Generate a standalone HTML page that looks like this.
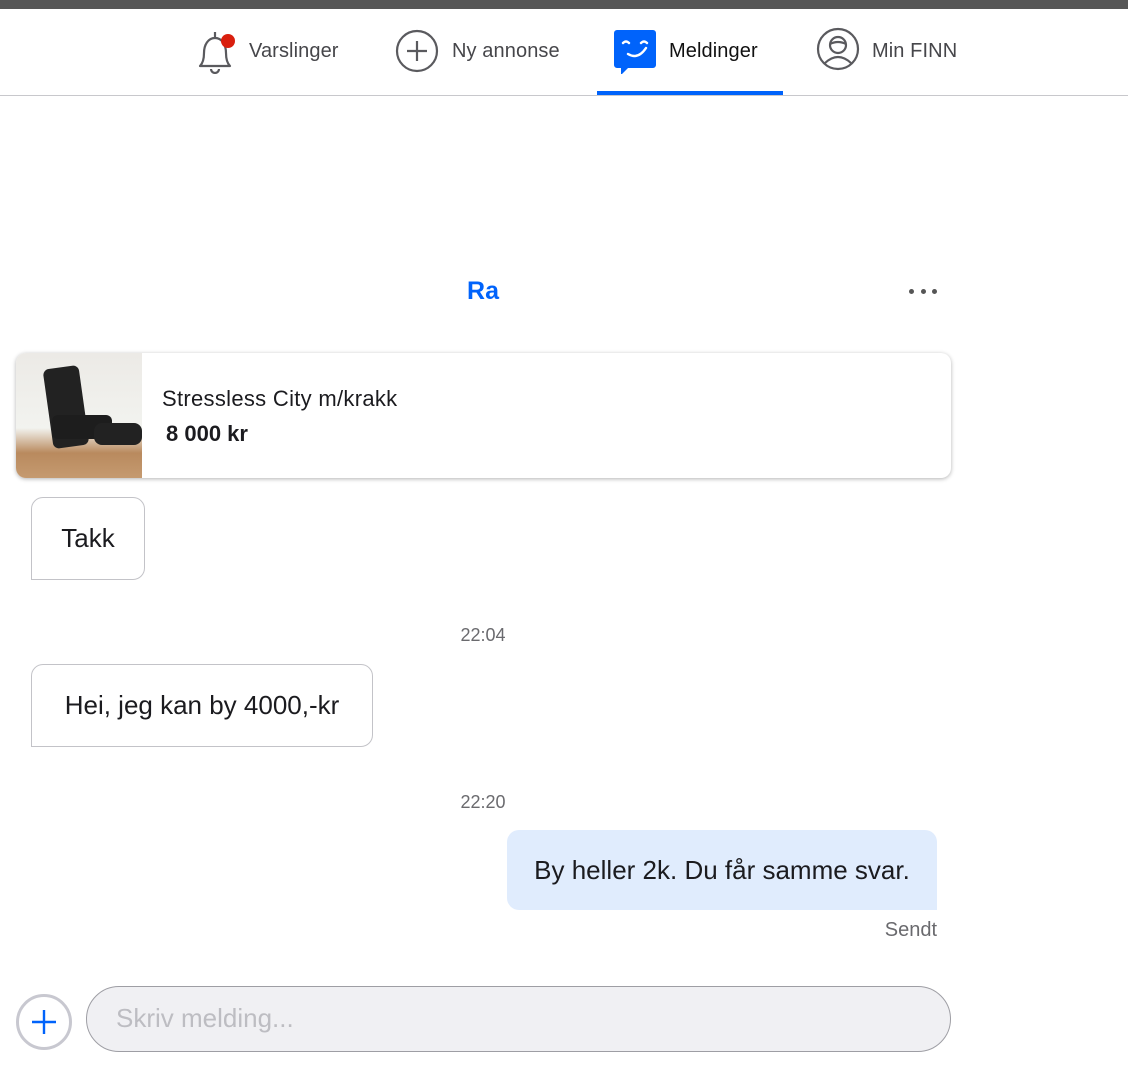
<!DOCTYPE html>
<html><head><meta charset="utf-8"><style>
*{margin:0;padding:0;box-sizing:border-box}
body{width:1128px;height:1080px;background:#fff;font-family:"Liberation Sans",sans-serif;position:relative;overflow:hidden;color:#1b1b1f}
.abs{position:absolute}
.top{left:0;top:0;width:1128px;height:9px;background:#575757}
.nav{left:0;top:95px;width:1128px;height:1px;background:#c8c8cc}
.navt{font-size:20px;color:#46464a;top:40px;letter-spacing:0.1px}
.bub{border:1.5px solid #c3c3c8;border-radius:12px;border-bottom-left-radius:0;font-size:26px;color:#1b1b1f;display:flex;align-items:center;justify-content:center}
.time{font-size:18px;color:#6a6a6e;left:0;width:966px;text-align:center}
</style></head><body>
<div class="abs top"></div>
<svg class="abs" style="left:196px;top:30px" width="40" height="44" viewBox="0 0 40 44"><path d="M19 2v5M4 36c3-3 4-7 4-13 0-8 4-15 11-15s11 7 11 15c0 6 1 10 4 13z" fill="none" stroke="#5a5a5e" stroke-width="2.2" stroke-linejoin="round"/><path d="M15 39a4 4 0 0 0 8 0" fill="none" stroke="#5a5a5e" stroke-width="2.2"/><circle cx="32" cy="11" r="7" fill="#d91f0e"/></svg>
<div class="abs navt" style="left:249px">Varslinger</div>
<svg class="abs" style="left:395px;top:29px" width="44" height="44"><circle cx="22" cy="22" r="20" fill="none" stroke="#5a5a5e" stroke-width="2.2"/><path d="M22 12v20M12 22h20" stroke="#5a5a5e" stroke-width="2.2"/></svg>
<div class="abs navt" style="left:452px">Ny annonse</div>
<svg class="abs" style="left:614px;top:30px" width="42" height="44"><path d="M3 0h36a3 3 0 0 1 3 3v32a3 3 0 0 1-3 3H14l-7 7v-7H3a3 3 0 0 1-3-3V3a3 3 0 0 1 3-3z" fill="#0063fb"/><path d="M9 13q3-3 6 0M27 13q3-3 6 0M14 24q10 6 18-6" fill="none" stroke="#fff" stroke-width="2.4" stroke-linecap="round"/></svg>
<div class="abs navt" style="left:669px;color:#111">Meldinger</div>
<div class="abs" style="left:597px;top:91px;width:186px;height:4px;background:#0063fb"></div>
<svg class="abs" style="left:816px;top:27px" width="44" height="44"><circle cx="22" cy="22" r="20" fill="none" stroke="#5a5a5e" stroke-width="2.2"/><circle cx="22" cy="18" r="8" fill="none" stroke="#5a5a5e" stroke-width="2.2"/><path d="M14 17q8-4 16 0M9 36q13-12 26 0" fill="none" stroke="#5a5a5e" stroke-width="2.2"/></svg>
<div class="abs navt" style="left:872px">Min FINN</div>
<div class="abs nav"></div>
<div class="abs" style="left:0;width:966px;top:277px;text-align:center;font-size:25px;font-weight:bold;color:#0063fb">Ra</div>
<div class="abs" style="left:909px;top:289px;width:28px;height:6px;display:flex;justify-content:space-between"><i style="width:5px;height:5px;border-radius:50%;background:#555"></i><i style="width:5px;height:5px;border-radius:50%;background:#555"></i><i style="width:5px;height:5px;border-radius:50%;background:#555"></i></div>
<div class="abs" style="left:16px;top:353px;width:935px;height:125px;border-radius:10px;box-shadow:0 1px 4px rgba(0,0,0,.3);background:#fff;overflow:hidden">
<div style="position:absolute;left:0;top:0;width:126px;height:125px;background:linear-gradient(180deg,#eceae6 0%,#f2f3ef 60%,#b98a5e 80%,#c59a70 100%)">
<div style="position:absolute;left:32px;top:14px;width:36px;height:80px;background:#222;border-radius:6px;transform:rotate(-8deg)"></div>
<div style="position:absolute;left:36px;top:62px;width:60px;height:24px;background:#1d1d1d;border-radius:6px"></div>
<div style="position:absolute;left:78px;top:70px;width:48px;height:22px;background:#222;border-radius:8px"></div>
</div>
<div style="position:absolute;left:146px;top:33px;font-size:22px;color:#1b1b1f;letter-spacing:0.3px">Stressless City m/krakk</div>
<div style="position:absolute;left:150px;top:68px;font-size:22px;font-weight:bold;color:#1b1b1f">8 000 kr</div>
</div>
<div class="abs bub" style="left:31px;top:497px;width:114px;height:83px">Takk</div>
<div class="abs time" style="top:625px">22:04</div>
<div class="abs bub" style="left:31px;top:664px;width:342px;height:83px">Hei, jeg kan by 4000,-kr</div>
<div class="abs time" style="top:792px">22:20</div>
<div class="abs" style="left:507px;top:830px;width:430px;height:80px;background:#e0ecfd;border-radius:12px;border-bottom-right-radius:0;font-size:26px;display:flex;align-items:center;justify-content:center">By heller 2k. Du får samme svar.</div>
<div class="abs" style="left:860px;top:919px;width:77px;text-align:right;font-size:20px;color:#6a6a6e">Sendt</div>
<svg class="abs" style="left:15px;top:993px" width="58" height="58"><circle cx="29" cy="29" r="26.5" fill="#fff" stroke="#c8c8d0" stroke-width="3"/><path d="M29 17v24M17 29h24" stroke="#0063fb" stroke-width="2.4"/></svg>
<div class="abs" style="left:86px;top:986px;width:865px;height:66px;border:1.5px solid #9e9ea4;border-radius:33px;background:#f0f0f3;font-size:26px;color:#bdbdc2;padding-left:29px;line-height:63px">Skriv melding...</div>
</body></html>
